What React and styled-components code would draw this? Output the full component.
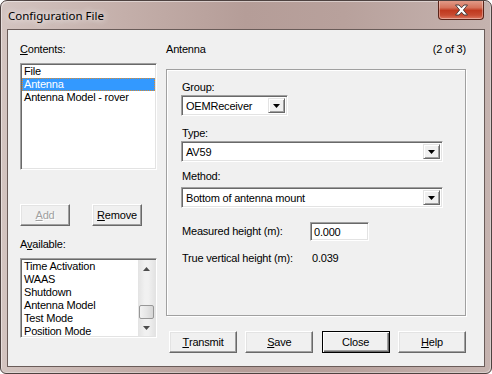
import React from 'react';
import styled, { createGlobalStyle } from 'styled-components';

const GlobalStyle = createGlobalStyle`
  html, body { margin: 0; padding: 0; background: #fff; }
  body { font-family: "Liberation Sans", Arial, sans-serif; font-size: 11px; letter-spacing: -0.2px; color: #000; }
`;

const Window = styled.div`
  width: 492px;
  height: 374px;
  box-sizing: border-box;
  border: 1px solid #4e4240;
  border-radius: 7px 7px 6px 6px;
  background: linear-gradient(to right, #d3c4c0 0%, #c4afaa 25%, #b59d98 50%, #b8a19c 70%, #c5b3af 100%);
  box-shadow: inset 1px 1px 0 rgba(255,255,255,.45), inset -1px -1px 0 rgba(255,255,255,.35);
  display: flex;
  flex-direction: column;
  overflow: hidden;
`;

const TitleBar = styled.div`
  height: 28px;
  flex: none;
  display: flex;
  align-items: flex-start;
  justify-content: space-between;
  padding: 0 7px 0 7px;
`;

const Title = styled.div`
  font-family: "Noto Sans", "Open Sans", sans-serif;
  font-size: 11.5px;
  letter-spacing: 0;
  line-height: 16px;
  margin-top: 7px;
  color: #000;
  text-shadow: 0 0 6px rgba(255,255,255,.9), 0 0 10px rgba(255,255,255,.6);
`;

const CloseBox = styled.div`
  width: 46px;
  height: 20px;
  margin-top: -1px;
  box-sizing: border-box;
  border: 1px solid #5b2419;
  border-top: none;
  border-radius: 0 0 4px 4px;
  background: linear-gradient(to bottom, #e3a08e 0%, #d5735b 40%, #c0391f 55%, #c84b31 80%, #de7861 100%);
  box-shadow: inset 0 0 0 1px rgba(255,255,255,.35);
  display: flex;
  align-items: center;
  justify-content: center;
`;

const Client = styled.div`
  flex: 1;
  margin: 0 6px 6px 6px;
  border: 1px solid #6a5c59;
  background: #f0f0f0;
  display: flex;
  padding: 13px 17px 0 12px;
  gap: 9px;
`;

const LeftCol = styled.div`
  width: 137px;
  display: flex;
  flex-direction: column;
`;

const RightCol = styled.div`
  width: 300px;
  display: flex;
  flex-direction: column;
`;

const Label = styled.div`
  line-height: 13px;
  height: 13px;
  white-space: nowrap;
  margin-top: ${p => p.$mt || 0}px;
`;

const U = styled.span`
  text-decoration: underline;
  text-underline-offset: 1px;
`;

const Sunken = styled.div`
  box-sizing: border-box;
  border: 1px solid;
  border-color: #a0a0a0 #fff #fff #a0a0a0;
  box-shadow: inset 1px 1px 0 #696969, inset -1px -1px 0 #e3e3e3;
  background: #fff;
`;

const ListBox = styled(Sunken)`
  margin-top: ${p => p.$mt}px;
  height: ${p => p.$h}px;
  padding: 1px;
  overflow: hidden;
  display: flex;
`;

const Items = styled.div`
  flex: 1;
  display: flex;
  flex-direction: column;
`;

const Item = styled.div`
  height: 13px;
  line-height: 13px;
  padding-left: 2px;
  box-sizing: border-box;
  white-space: nowrap;
  ${p => p.$selected && `
    background: #3399ff;
    color: #fff;
    outline: 1px dotted #d98a2f;
    outline-offset: -1px;
  `}
`;

const ScrollBar = styled.div`
  width: 17px;
  display: flex;
  flex-direction: column;
  background: linear-gradient(to right, #e3e3e3, #f1f1f1 40%, #f1f1f1 60%, #e3e3e3);
`;

const ScrollBtn = styled.div`
  height: 17px;
  display: flex;
  align-items: center;
  justify-content: center;
`;

const Track = styled.div`
  flex: 1;
  display: flex;
  flex-direction: column;
  justify-content: flex-end;
  padding: 0 1px;
`;

const Thumb = styled.div`
  height: 14px;
  box-sizing: border-box;
  border: 1px solid #979797;
  border-radius: 2px;
  background: linear-gradient(to right, #f2f2f2, #e6e6e6 50%, #d6d6d6);
`;

const ButtonRow = styled.div`
  display: flex;
  margin-top: ${p => p.$mt || 0}px;
  gap: ${p => p.$gap || 0}px;
  padding-left: ${p => p.$pl || 0}px;
  justify-content: ${p => p.$justify || 'flex-start'};
`;

const Button = styled.div`
  width: ${p => p.$w}px;
  height: 22px;
  box-sizing: border-box;
  display: flex;
  align-items: center;
  justify-content: center;
  background: #f0f0f0;
  border: 1px solid;
  border-color: #fff #696969 #696969 #fff;
  box-shadow: inset -1px -1px 0 #a0a0a0, inset 1px 1px 0 #e3e3e3;
  color: ${p => (p.$disabled ? '#a0a0a0' : '#000')};
  text-shadow: ${p => (p.$disabled ? '1px 1px 0 #fff' : 'none')};
  ${p => p.$default && `
    border: 1px solid #000;
    box-shadow: inset 1px 1px 0 #fff, inset -1px -1px 0 #696969, inset -2px -2px 0 #a0a0a0;
  `}
`;

const Header = styled.div`
  display: flex;
  justify-content: space-between;
  line-height: 13px;
  height: 13px;
`;

const GroupBox = styled.div`
  margin-top: 13px;
  height: 247px;
  box-sizing: border-box;
  border: 1px solid #a0a0a0;
  box-shadow: inset 1px 1px 0 #fff, 1px 1px 0 #fff;
  padding: 11px 0 0 14px;
  display: flex;
  flex-direction: column;
`;

const FieldLabel = styled(Label)`
  padding-left: 1px;
`;

const Combo = styled(Sunken)`
  width: ${p => p.$w}px;
  height: 21px;
  margin-top: ${p => p.$mt || 0}px;
  display: flex;
  align-items: stretch;
  padding: 2px;
`;

const ComboText = styled.div`
  flex: 1;
  line-height: 17px;
  padding-left: 2px;
  white-space: nowrap;
`;

const DropBtn = styled.div`
  width: 17px;
  box-sizing: border-box;
  border: 1px solid;
  border-color: #e3e3e3 #696969 #696969 #e3e3e3;
  box-shadow: inset 1px 1px 0 #fff, inset -1px -1px 0 #a0a0a0;
  background: #f0f0f0;
  display: flex;
  align-items: center;
  justify-content: center;
`;

const Row = styled.div`
  display: flex;
  align-items: center;
  margin-top: ${p => p.$mt || 0}px;
  height: ${p => p.$h || 13}px;
  padding-left: 1px;
`;

const RowLabel = styled.div`
  width: 128px;
  white-space: nowrap;
  line-height: 13px;
`;

const TextInput = styled(Sunken)`
  width: 59px;
  height: 19px;
  line-height: 15px;
  padding: 2px 3px;
`;

const Value = styled.div`
  padding-left: 2px;
  line-height: 13px;
`;

const Arrow = () => (
  <svg width="7" height="4" viewBox="0 0 7 4">
    <path d="M0 0 L7 0 L3.5 4 Z" fill="#000" />
  </svg>
);

const ScrollArrow = ({ up }) => (
  <svg width="7" height="4" viewBox="0 0 7 4">
    <path d={up ? 'M3.5 0 L7 4 L0 4 Z' : 'M0 0 L7 0 L3.5 4 Z'} fill="#4d4d4d" />
  </svg>
);

const CloseGlyph = () => (
  <svg width="15" height="12" viewBox="0 0 15 12">
    <path
      d="M1.5 1 L5 1 L7.5 3.8 L10 1 L13.5 1 L9.4 6 L13.5 11 L10 11 L7.5 8.2 L5 11 L1.5 11 L5.6 6 Z"
      fill="#fff"
      stroke="#4a3f3e"
      strokeWidth="1"
      strokeLinejoin="round"
    />
  </svg>
);

const contents = ['File', 'Antenna', 'Antenna Model - rover'];
const available = ['Time Activation', 'WAAS', 'Shutdown', 'Antenna Model', 'Test Mode', 'Position Mode'];

export default function App() {
  return (
    <>
      <GlobalStyle />
      <Window>
        <TitleBar>
          <Title>Configuration File</Title>
          <CloseBox>
            <CloseGlyph />
          </CloseBox>
        </TitleBar>
        <Client>
          <LeftCol>
            <Label><U>C</U>ontents:</Label>
            <ListBox $mt={7} $h={107}>
              <Items>
                {contents.map(c => (
                  <Item key={c} $selected={c === 'Antenna'}>{c}</Item>
                ))}
              </Items>
            </ListBox>
            <ButtonRow $mt={34} $gap={22}>
              <Button $w={50} $disabled><U>A</U>dd</Button>
              <Button $w={50}><U>R</U>emove</Button>
            </ButtonRow>
            <Label $mt={12}>A<U>v</U>ailable:</Label>
            <ListBox $mt={7} $h={80}>
              <Items>
                {available.map(a => (
                  <Item key={a}>{a}</Item>
                ))}
              </Items>
              <ScrollBar>
                <ScrollBtn><ScrollArrow up /></ScrollBtn>
                <Track><Thumb /></Track>
                <ScrollBtn><ScrollArrow /></ScrollBtn>
              </ScrollBar>
            </ListBox>
          </LeftCol>
          <RightCol>
            <Header>
              <span>Antenna</span>
              <span>(2 of 3)</span>
            </Header>
            <GroupBox>
              <FieldLabel>Group:</FieldLabel>
              <Combo $w={107} $mt={1}>
                <ComboText>OEMReceiver</ComboText>
                <DropBtn><Arrow /></DropBtn>
              </Combo>
              <FieldLabel $mt={11}>Type:</FieldLabel>
              <Combo $w={262} $mt={1}>
                <ComboText>AV59</ComboText>
                <DropBtn><Arrow /></DropBtn>
              </Combo>
              <FieldLabel $mt={8}>Method:</FieldLabel>
              <Combo $w={262} $mt={4}>
                <ComboText>Bottom of antenna mount</ComboText>
                <DropBtn><Arrow /></DropBtn>
              </Combo>
              <Row $mt={14} $h={19}>
                <RowLabel>Measured height (m):</RowLabel>
                <TextInput>0.000</TextInput>
              </Row>
              <Row $mt={11}>
                <RowLabel>True vertical height (m):</RowLabel>
                <Value>0.039</Value>
              </Row>
            </GroupBox>
            <ButtonRow $mt={15} $pl={3} $justify="space-between">
              <Button $w={68}><U>T</U>ransmit</Button>
              <Button $w={68}><U>S</U>ave</Button>
              <Button $w={68} $default>Close</Button>
              <Button $w={68}><U>H</U>elp</Button>
            </ButtonRow>
          </RightCol>
        </Client>
      </Window>
    </>
  );
}
